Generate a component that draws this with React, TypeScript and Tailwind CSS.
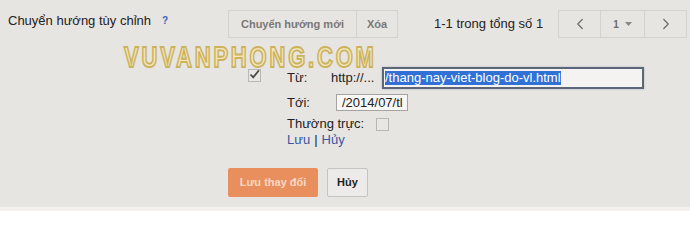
import { ChevronLeft, ChevronRight } from "lucide-react";

// Blogger "custom redirects" panel, with the VUVANPHONG.COM watermark on top.

function CheckBox({ checked }: { checked?: boolean }) {
  return (
    <span className="relative inline-block size-[13px] border border-[#b9b7b4] bg-[#e9e7e4]">
      {checked && (
        <svg
          viewBox="0 0 13 13"
          className="absolute -left-px -top-[2px] size-[13px]"
          fill="none"
          stroke="#4a4a4a"
          strokeWidth="1.8"
        >
          <path d="M2.5 6.5 L5.2 9.3 L11 2.2" />
        </svg>
      )}
    </span>
  );
}

export default function App() {
  return (
    <div className="relative flex h-[211px] w-[690px] flex-col overflow-hidden bg-[#e7e5e2] font-['Liberation_Sans',Arial,sans-serif] text-[13px] text-[#222]">
      {/* header row */}
      <div className="mt-[10px] flex h-[28px] items-start">
        <div className="ml-2 mt-[3px] flex w-[220px] items-center leading-[16px]">
          <span>Chuyển hướng tùy chỉnh</span>
          <span className="ml-[11px] text-[10px] font-bold text-[#3b5fc0]">?</span>
        </div>
        <div className="flex h-[28px] border border-[#d4d2cf] text-[11px] font-bold text-[#7a7875]">
          <button className="w-[128px] border-r border-[#d4d2cf]">Chuyển hướng mới</button>
          <button className="w-[40px]">Xóa</button>
        </div>
        <div className="ml-[36px] flex h-[28px] items-center">1-1 trong tổng số 1</div>
        <div className="mr-[3px] ml-auto flex h-[28px] border border-[#d4d2cf] text-[#6d6b68]">
          <button className="flex w-[42px] items-center justify-center border-r border-[#d4d2cf]">
            <ChevronLeft className="size-[18px]" strokeWidth={1.6} />
          </button>
          <button className="flex w-[44px] items-center justify-center gap-[6px] border-r border-[#d4d2cf] text-[10px] font-bold">
            1
            <svg viewBox="0 0 7 4" className="h-[4px] w-[7px]" fill="#8a8886">
              <path d="M0 0 H7 L3.5 4 Z" />
            </svg>
          </button>
          <button className="flex w-[41px] items-center justify-center">
            <ChevronRight className="size-[18px]" strokeWidth={1.6} />
          </button>
        </div>
      </div>

      {/* redirect entry */}
      <div className="mt-[29px] flex pl-[248px]">
        <div className="w-[39px] pt-[1px]">
          <CheckBox checked />
        </div>
        <div className="flex flex-col">
          <div className="flex h-[22px] items-center">
            <span className="w-[44px]">Từ:</span>
            <span className="w-[51px]">http://...</span>
            <div className="flex h-[22px] w-[262px] items-center border-2 border-[#5d6676] bg-[#f4f3f1] pl-[1px] shadow-[0_0_2px_#a9b4c8]">
              <span className="bg-[#3171d6] leading-[14px] text-white">/thang-nay-viet-blog-do-vl.html</span>
            </div>
          </div>
          <div className="mt-[5px] flex h-[17px] items-center">
            <span className="w-[49px]">Tới:</span>
            <div className="flex h-[17px] w-[72px] items-center overflow-hidden whitespace-nowrap border border-[#a4a3a1] bg-[#f8f7f6] pl-[5px]">
              /2014/07/tl
            </div>
          </div>
          <div className="mt-[5px] flex h-[16px] items-center">
            <span className="w-[89px]">Thường trực:</span>
            <CheckBox />
          </div>
          <div className="flex h-[16px] items-center">
            <a className="text-[#3b55a0]">Lưu</a>
            <span className="mx-[4px]">|</span>
            <a className="text-[#3b55a0]">Hủy</a>
          </div>
        </div>
      </div>

      {/* save / cancel */}
      <div className="mt-[20px] flex gap-[9px] pl-[228px]">
        <button className="h-[29px] w-[90px] rounded-[2px] bg-[#e98f5d] text-[11px] font-bold text-[#f9d9c6]">
          Lưu thay đổi
        </button>
        <button className="h-[29px] w-[41px] rounded-[2px] border border-[#c6c4c1] bg-[#ecebe9] text-[11px] font-bold text-[#222]">
          Hủy
        </button>
      </div>

      <div className="mt-auto h-[4px] bg-[#f3f2f0]" />

      {/* watermark */}
      <div className="pointer-events-none absolute left-[124px] top-[47px] origin-top scale-y-[1.35] whitespace-nowrap text-[22px] leading-[16px] font-bold tracking-[2.8px] text-[#f1e6bd] [-webkit-text-stroke:1.4px_#cdb25c]">
        VUVANPHONG.COM
      </div>
    </div>
  );
}
